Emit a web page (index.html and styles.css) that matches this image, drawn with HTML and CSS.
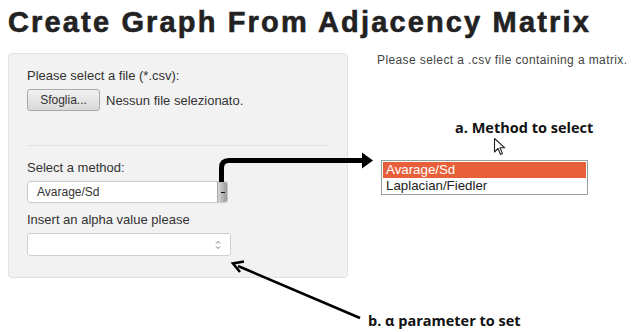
FILE: index.html
```html
<!DOCTYPE html>
<html>
<head>
<meta charset="utf-8">
<link rel="stylesheet" href="styles.css">
</head>
<body>
<h1 class="title">Create Graph From Adjacency Matrix</h1>
<div class="layout">
  <div class="well">
    <div class="group">
      <label class="lbl">Please select a file (*.csv):</label>
      <div class="file-row">
        <span class="file-btn">Sfoglia...</span>
        <span class="file-name">Nessun file selezionato.</span>
      </div>
    </div>
    <hr class="sep">
    <div class="group">
      <label class="lbl">Select a method:</label>
      <div class="select">
        <span class="select-val">Avarage/Sd</span>
        <span class="select-btn"><span class="dash"></span></span>
      </div>
    </div>
    <div class="group">
      <label class="lbl">Insert an alpha value please</label>
      <div class="num">
        <svg class="spin" width="6" height="10" viewBox="0 0 6 10"><path d="M1 3.5 L3 1.5 L5 3.5" fill="none" stroke="#777" stroke-width="1"/><path d="M1 6.5 L3 8.5 L5 6.5" fill="none" stroke="#777" stroke-width="1"/></svg>
      </div>
    </div>
  </div>
  <div class="main">Please select a .csv file containing a matrix.</div>
</div>

<div class="note note-a">a. Method to select</div>
<svg class="cursor" width="14" height="20" viewBox="0 0 14 20"><path d="M1.5 1.5 L1.5 15 L5 11.5 L7.5 17.5 L9.5 16.6 L7 10.8 L11.8 10.8 Z" fill="#fff" stroke="#222" stroke-width="1.1" stroke-linejoin="round"/></svg>
<div class="popup">
  <div class="opt opt-sel">Avarage/Sd</div>
  <div class="opt">Laplacian/Fiedler</div>
</div>
<div class="note note-b">b. α parameter to set</div>
<svg class="arrows" width="640" height="332" viewBox="0 0 640 332">
  <path d="M221.5 182 L221.5 168 Q221.5 160.5 229 160.5 L364 160.5" fill="none" stroke="#000" stroke-width="5"/>
  <path d="M362 152.5 L373 160.5 L362 168.5 Z" fill="#000"/>
  <path d="M360 318 L238 266" fill="none" stroke="#000" stroke-width="2.6"/>
  <path d="M244 261.5 L233 263.5 L240 272" fill="none" stroke="#000" stroke-width="2.6" stroke-linejoin="miter"/>
</svg>
</body>
</html>
```

FILE: styles.css
```css
html, body {
  margin: 0;
  padding: 0;
  background: #fff;
  width: 640px;
  height: 332px;
  overflow: hidden;
  position: relative;
  font-family: "Liberation Sans", Arial, sans-serif;
  color: #333;
}

.title {
  margin: 0;
  padding: 4px 0 0 8px;
  font-size: 29px;
  line-height: 36px;
  font-weight: bold;
  color: #222;
  letter-spacing: 2.15px;
  -webkit-text-stroke: 0.6px #222;
  white-space: nowrap;
}

.layout {
  display: flex;
  margin-top: 13px;
  padding-left: 8px;
  gap: 29px;
}

.well {
  width: 302px;
  background: #f2f2f2;
  border: 1px solid #e2e2e2;
  border-radius: 4px;
  padding: 14px 18px 21px 18px;
}

.group {
  display: flex;
  flex-direction: column;
}

.lbl {
  font-size: 13px;
  line-height: 16px;
  color: #333;
  margin-bottom: 5px;
}

.file-row {
  display: flex;
  align-items: center;
  gap: 6px;
}

.file-btn {
  display: inline-block;
  width: 71px;
  height: 20px;
  line-height: 20px;
  text-align: center;
  font-size: 12px;
  color: #333;
  border: 1px solid #a9a9a9;
  border-radius: 3px;
  background: linear-gradient(#f1f1f1, #d9d9d9);
}

.file-name {
  font-size: 13px;
  color: #333;
}

.sep {
  border: 0;
  border-top: 1px solid #e4e4e4;
  margin: 34px 0 14px 0;
}

.select {
  width: 199px;
  height: 20px;
  background: #fff;
  border: 1px solid #c8c8c8;
  border-radius: 3px;
  display: flex;
  align-items: stretch;
  margin-bottom: 9px;
}

.select-val {
  flex: 1;
  font-size: 12px;
  line-height: 20px;
  padding-left: 9px;
  color: #333;
}

.select-btn {
  width: 9px;
  background: linear-gradient(90deg, #d6d6d6, #9a9a9a);
  border-left: 1px solid #aaa;
  display: flex;
  align-items: center;
  justify-content: center;
  border-radius: 0 2px 2px 0;
}

.dash {
  width: 4px;
  height: 1px;
  background: #111;
}

.num {
  width: 202px;
  height: 21px;
  background: #fff;
  border: 1px solid #cfcfcf;
  border-radius: 3px;
  display: flex;
  align-items: center;
  justify-content: flex-end;
}

.spin {
  margin-right: 9px;
}

.main {
  font-size: 12px;
  color: #444;
  padding-top: 0;
  letter-spacing: 0.4px;
  white-space: nowrap;
}

.note {
  position: absolute;
  font-family: "Open Sans", "Noto Sans", sans-serif;
  font-weight: bold;
  font-size: 14.5px;
  color: #111;
  white-space: nowrap;
}

.note-a {
  left: 455px;
  top: 118px;
}

.note-b {
  left: 368px;
  top: 311px;
}

.cursor {
  position: absolute;
  left: 493px;
  top: 137px;
}

.popup {
  position: absolute;
  left: 381px;
  top: 160px;
  width: 205px;
  border: 1px solid #93a39b;
  background: #fff;
}

.opt {
  font-size: 13.3px;
  line-height: 16px;
  height: 16px;
  padding-left: 4px;
  color: #222;
  font-family: "Liberation Sans", Arial, sans-serif;
}

.opt-sel {
  background: #e7603a;
  color: #fff;
  margin: 1px 1px 0 1px;
  padding-left: 3px;
}

.arrows {
  position: absolute;
  left: 0;
  top: 0;
  pointer-events: none;
}
```
